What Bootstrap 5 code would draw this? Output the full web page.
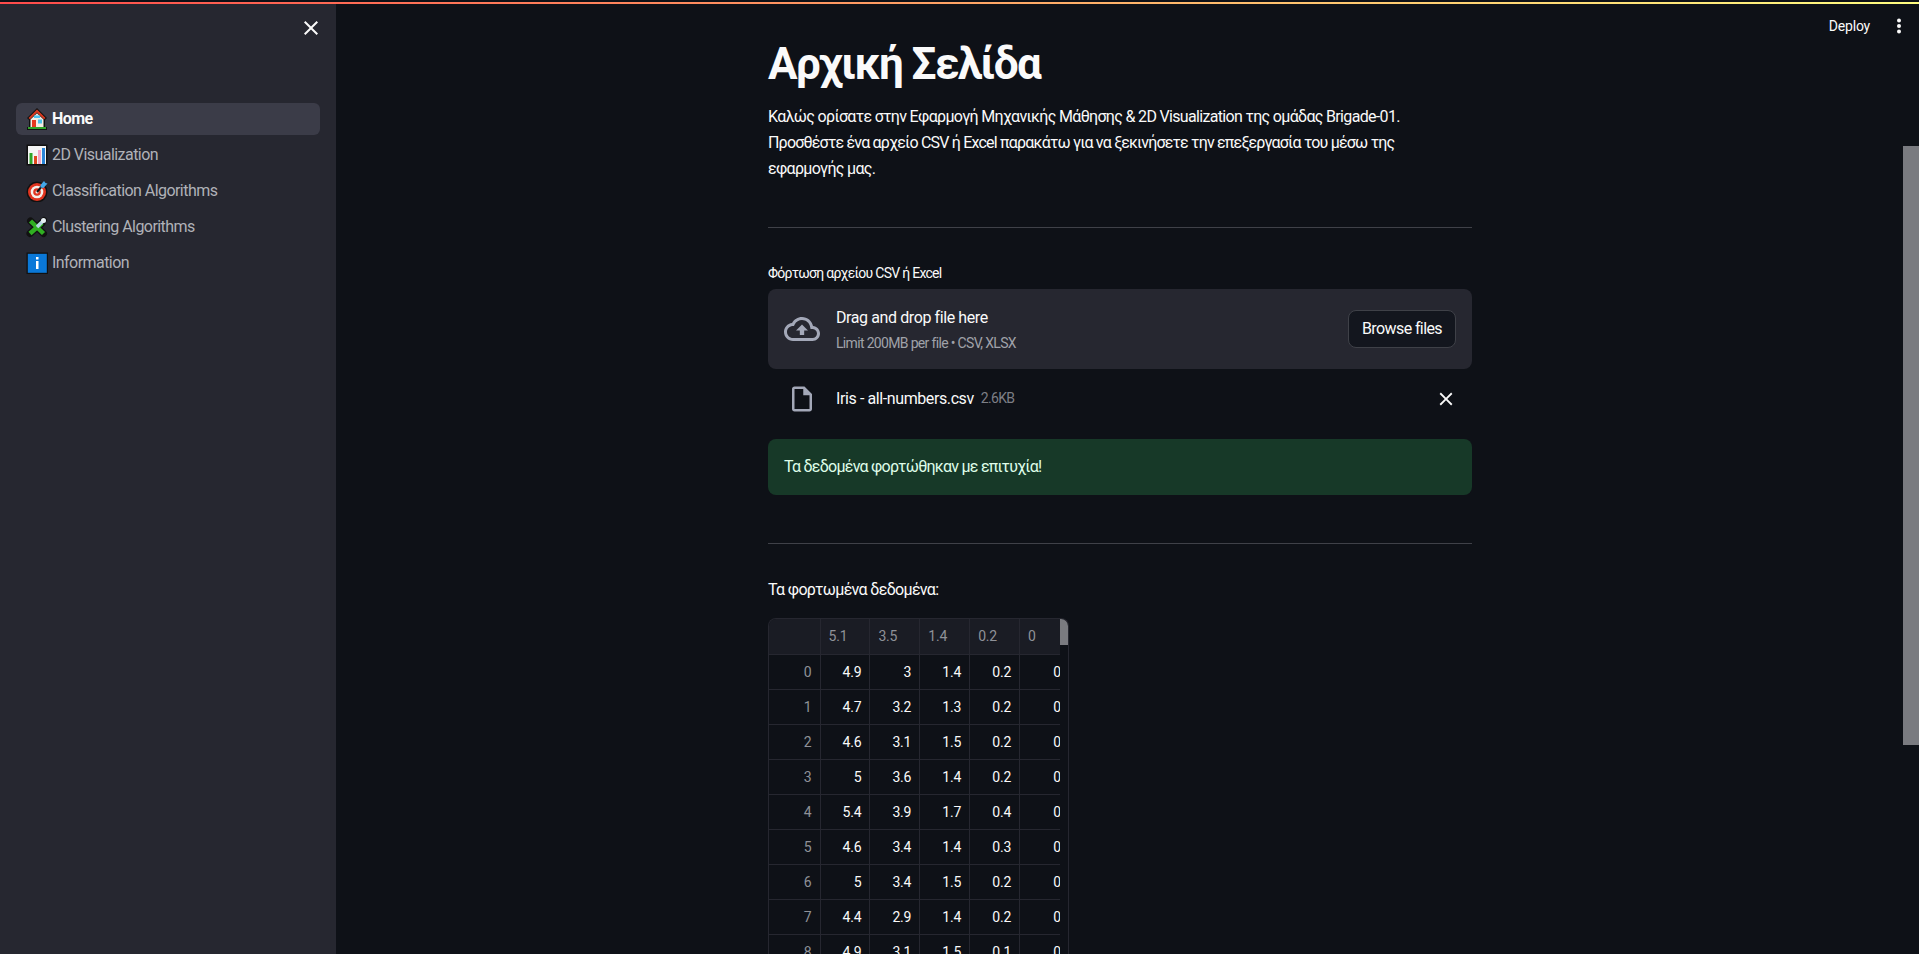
<!DOCTYPE html>
<html lang="el">
<head>
<meta charset="utf-8">
<title>Αρχική Σελίδα</title>
<link rel="stylesheet" href="https://cdn.jsdelivr.net/npm/bootstrap@5.3.0/dist/css/bootstrap.min.css">
<style>
html, body { height: 100%; }
body { background: #0e1117; color: #fafafa; font-family: "Roboto", "Noto Sans", sans-serif; overflow: hidden; letter-spacing: -0.67px; }
.top-line { height: 2px; margin-top: 2px; background: linear-gradient(90deg, #ff4b4b, #fffd80); flex: none; }
.app-frame { height: 954px; position: relative; overflow: hidden; }
.app-body { height: 950px; }
.side-pane { width: 336px; flex: none; background: #262730; padding: 12px 16px 0; }
.side-close { color: #fafafa; padding-right: 0; height: 24px; margin-right: -3px; }
.side-nav { margin-top: 63px; gap: 4px; }
.side-link { height: 32px; color: #b0b2b8; font-size: 16px; border-radius: 6px; padding: 0 10px; gap: 4px; letter-spacing: -0.55px; }
.side-link:hover { color: #fafafa; }
.side-link.is-current { background: #3b3c48; color: #fafafa; font-weight: 700; }
.side-link svg { flex: none; }
.main-pane { min-width: 0; }
.content-col { width: 704px; margin-left: 432px; }
.page-title { font-size: 44px; font-weight: 700; line-height: 1.2; margin: 34px 0 0; letter-spacing: -1.55px; }
.intro-text { font-size: 16px; line-height: 26px; margin: 13px 0 0; }
.intro-long { letter-spacing: -0.8px; }
.rule-line { border: 0; border-top: 1px solid #3f4148; opacity: 1; margin: 0; }
.rule-one { margin-top: 45px; }
.field-label { font-size: 14px; line-height: 20px; margin-top: 35px; height: 26px; letter-spacing: -0.72px; }
.drop-box { height: 80px; background: #262730; border-radius: 8px; padding: 0 16px; }
.drop-icon { color: #a3a8b8; margin-right: 16px; flex: none; }
.drop-title { font-size: 16px; line-height: 24px; letter-spacing: -0.4px; margin-top: 1px; }
.drop-sub { font-size: 14px; line-height: 20px; color: #a0a2a9; margin-top: 3px; }
.browse-btn { background: #13161e; border: 1px solid #3f4148; color: #fafafa; border-radius: 8px; height: 38px; width: 108px; font-size: 16px; padding: 0; letter-spacing: -0.6px; }
.file-row { height: 60px; padding-left: 16px; }
.file-icon { color: #a3a8b8; width: 36px; margin-right: 16px; flex: none; }
.file-name { font-size: 16px; letter-spacing: -0.4px; }
.file-size { font-size: 14px; color: #7d7f86; margin-left: 7px; }
.file-x { margin-left: auto; margin-right: 15px; color: #fafafa; }
.ok-box { height: 56px; background: #173928; color: #dffde9; border-radius: 8px; margin-top: 10px; padding: 0 16px; font-size: 16px; letter-spacing: -0.75px; }
.rule-two { margin-top: 48px; }
.table-caption { font-size: 16px; line-height: 24px; margin-top: 34px; height: 40px; }
.grid-wrap { width: 301px; height: 340px; position: relative; overflow: hidden; border: 1px solid #262730; border-bottom: 0; border-radius: 8px 8px 0 0; }
.data-grid { width: 301px; table-layout: fixed; border-collapse: collapse; font-size: 14px; letter-spacing: -0.2px; margin: 0; }
.data-grid th, .data-grid td { border: 1px solid #262730; border-top: 0; border-left: 0; padding: 0 8px; height: 35px; font-weight: 400; }
.data-grid thead th { background: #1a1c24; color: #8f9198; height: 36px; text-align: left; }
.data-grid thead th:first-child { width: 51px; }
.data-grid tbody td { text-align: right; color: #fafafa; }
.data-grid tbody th { text-align: right; color: #8f9198; }
.grid-scroll { position: absolute; top: 0; right: 0; width: 8px; height: 100%; background: #0e1117; }
.grid-thumb { height: 26px; background: #7a7b80; }
.page-thumb { position: absolute; top: 146px; right: 0; width: 16px; height: 599px; background: #7a7b80; }
.deploy-bar { position: absolute; top: 16px; right: 17px; gap: 26px; color: #fafafa; font-size: 14px; height: 20px; letter-spacing: -0.2px; }
</style>
</head>
<body>
<div class="app-frame">
  <div class="top-line"></div>
  <div class="app-body d-flex">
    <aside class="side-pane">
      <div class="d-flex justify-content-end side-close">
        <svg width="24" height="24" viewBox="0 0 24 24" fill="currentColor"><path d="M19 6.41 17.59 5 12 10.59 6.41 5 5 6.41 10.59 12 5 17.59 6.41 19 12 13.41 17.59 19 19 17.59 13.41 12z"/></svg>
      </div>
      <nav class="nav flex-column side-nav">
        <a class="nav-link side-link is-current d-flex align-items-center" href="#">
          <svg width="22" height="22" viewBox="0 0 22 22"><path d="M11 0 1 10 3 12v7H1v3h20v-3h-2v-7l2-2z" fill="#111"/><path d="M11 1.500 2.500 10 4 11.300 11 4.500l7 6.800 1.500-1.300z" fill="#d8391f"/><path d="M4.500 11.500 11 5.300l6.500 6.200V19h-13z" fill="#f4ede2"/><rect x="6" y="12" width="4" height="7" fill="#e5381f"/><rect x="12" y="11.500" width="4" height="4" fill="#4cc4ee"/><rect x="8" y="7.500" width="6" height="2.500" fill="#4cc4ee"/><rect x="2" y="19" width="18" height="2" fill="#2fa52a"/></svg>
          <span>Home</span>
        </a>
        <a class="nav-link side-link d-flex align-items-center" href="#">
          <svg width="22" height="22" viewBox="0 0 22 22"><rect x=".5" y=".5" width="21" height="21" fill="#111"/><rect x="2" y="2" width="18" height="18" fill="#f5f5f5"/><rect x="3.500" y="9" width="3" height="11" fill="#2fa52a"/><rect x="8" y="12" width="3" height="8" fill="#e0481f"/><rect x="12" y="6" width="3" height="14" fill="#f3a6c6"/><rect x="16" y="4" width="3" height="16" fill="#2a85d8"/></svg>
          <span>2D Visualization</span>
        </a>
        <a class="nav-link side-link d-flex align-items-center" href="#">
          <svg width="22" height="22" viewBox="0 0 22 22"><circle cx="11" cy="12" r="10.500" fill="#111"/><circle cx="11" cy="12" r="9" fill="#e0341f"/><circle cx="11" cy="12" r="6.300" fill="#f5f0ea"/><circle cx="11" cy="12" r="3.800" fill="#e0341f"/><circle cx="11" cy="12" r="1.500" fill="#f5f0ea"/><path d="M11 12 17 5" stroke="#111" stroke-width="2"/><path d="M14.500 5 18 1l1.500 2 2 .5-4 4.500-3-.5z" fill="#43a8ea"/></svg>
          <span>Classification Algorithms</span>
        </a>
        <a class="nav-link side-link d-flex align-items-center" href="#">
          <svg width="22" height="22" viewBox="0 0 22 22"><path d="M4.500 5 17.500 17.500M4 17.500 16 7" stroke="#111" stroke-width="7" stroke-linecap="round"/><path d="M11 11 18 4" stroke="#111" stroke-width="6" stroke-linecap="round"/><path d="M4.500 5 17.500 17.500" stroke="#30b022" stroke-width="4.500"/><path d="M4 17.500 16 7" stroke="#30b022" stroke-width="4.500"/><path d="M11 11 18 4" stroke="#b6d3e3" stroke-width="3.500"/><circle cx="17.500" cy="4.500" r="2.500" fill="#e6eef3"/></svg>
          <span>Clustering Algorithms</span>
        </a>
        <a class="nav-link side-link d-flex align-items-center" href="#">
          <svg width="22" height="22" viewBox="0 0 22 22"><rect x=".5" y=".5" width="21.500" height="21.500" fill="#111"/><rect x="1.800" y="1.800" width="19" height="19" fill="#0a78d8"/><rect x="10" y="5" width="2.500" height="2.500" fill="#fff"/><rect x="10" y="9" width="2.500" height="8" fill="#fff"/></svg>
          <span>Information</span>
        </a>
      </nav>
    </aside>
    <main class="main-pane flex-grow-1">
      <div class="content-col">
        <h1 class="page-title">Αρχική Σελίδα</h1>
        <p class="intro-text">Καλώς ορίσατε στην Εφαρμογή Μηχανικής Μάθησης &amp; 2D Visualization της ομάδας Brigade-01.<br><span class="intro-long">Προσθέστε ένα αρχείο CSV ή Excel παρακάτω για να ξεκινήσετε την επεξεργασία του μέσω της</span><br>εφαρμογής μας.</p>
        <hr class="rule-line rule-one">
        <div class="field-label">Φόρτωση αρχείου CSV ή Excel</div>
        <div class="drop-box d-flex align-items-center">
          <svg class="drop-icon" width="36" height="36" viewBox="0 0 24 24" fill="currentColor"><path d="M19.350 10.040C18.670 6.590 15.640 4 12 4 9.110 4 6.600 5.640 5.350 8.040 2.340 8.360 0 10.910 0 14c0 3.310 2.690 6 6 6h13c2.760 0 5-2.240 5-5 0-2.640-2.050-4.780-4.650-4.960zM19 18H6c-2.210 0-4-1.790-4-4 0-2.050 1.530-3.760 3.560-3.970l1.070-.11.500-.95C8.080 7.140 9.940 6 12 6c2.620 0 4.880 1.860 5.390 4.430l.3 1.500 1.530.11c1.560.1 2.780 1.410 2.780 2.960 0 1.650-1.350 3-3 3zM8 13h2.550v3h2.900v-3H16l-4-4z"/></svg>
          <div class="flex-grow-1">
            <div class="drop-title">Drag and drop file here</div>
            <div class="drop-sub">Limit 200MB per file • CSV, XLSX</div>
          </div>
          <button type="button" class="btn browse-btn">Browse files</button>
        </div>
        <div class="file-row d-flex align-items-center">
          <div class="file-icon d-flex justify-content-center">
            <svg width="30" height="30" viewBox="0 0 24 24" fill="currentColor"><path d="M14 2H6c-1.100 0-1.990.9-1.990 2L4 20c0 1.100.89 2 1.990 2H18c1.100 0 2-.9 2-2V8l-6-6zM6 20V4h7v5h5v11H6z"/></svg>
          </div>
          <span class="file-name">Iris - all-numbers.csv</span>
          <span class="file-size">2.6KB</span>
          <svg class="file-x" width="22" height="22" viewBox="0 0 24 24" fill="currentColor"><path d="M19 6.410 17.590 5 12 10.590 6.410 5 5 6.410 10.590 12 5 17.590 6.410 19 12 13.410 17.590 19 19 17.590 13.410 12z"/></svg>
        </div>
        <div class="ok-box d-flex align-items-center">Τα δεδομένα φορτώθηκαν με επιτυχία!</div>
        <hr class="rule-line rule-two">
        <div class="table-caption">Τα φορτωμένα δεδομένα:</div>
        <div class="grid-wrap">
          <table class="data-grid">
            <thead>
              <tr><th></th><th>5.1</th><th>3.5</th><th>1.4</th><th>0.2</th><th>0</th></tr>
            </thead>
            <tbody>
              <tr><th>0</th><td>4.9</td><td>3</td><td>1.4</td><td>0.2</td><td>0</td></tr>
              <tr><th>1</th><td>4.7</td><td>3.2</td><td>1.3</td><td>0.2</td><td>0</td></tr>
              <tr><th>2</th><td>4.6</td><td>3.1</td><td>1.5</td><td>0.2</td><td>0</td></tr>
              <tr><th>3</th><td>5</td><td>3.6</td><td>1.4</td><td>0.2</td><td>0</td></tr>
              <tr><th>4</th><td>5.4</td><td>3.9</td><td>1.7</td><td>0.4</td><td>0</td></tr>
              <tr><th>5</th><td>4.6</td><td>3.4</td><td>1.4</td><td>0.3</td><td>0</td></tr>
              <tr><th>6</th><td>5</td><td>3.4</td><td>1.5</td><td>0.2</td><td>0</td></tr>
              <tr><th>7</th><td>4.4</td><td>2.9</td><td>1.4</td><td>0.2</td><td>0</td></tr>
              <tr><th>8</th><td>4.9</td><td>3.1</td><td>1.5</td><td>0.1</td><td>0</td></tr>
            </tbody>
          </table>
          <div class="grid-scroll"><div class="grid-thumb"></div></div>
        </div>
      </div>
    </main>
  </div>
  <div class="deploy-bar d-flex align-items-center">
    <span>Deploy</span>
    <svg width="6" height="16" viewBox="0 0 6 16" fill="currentColor"><circle cx="3" cy="2.500" r="2"/><circle cx="3" cy="8" r="2"/><circle cx="3" cy="13.500" r="2"/></svg>
  </div>
  <div class="page-thumb"></div>
</div>
<script src="https://cdn.jsdelivr.net/npm/bootstrap@5.3.0/dist/js/bootstrap.bundle.min.js"></script>
</body>
</html>
